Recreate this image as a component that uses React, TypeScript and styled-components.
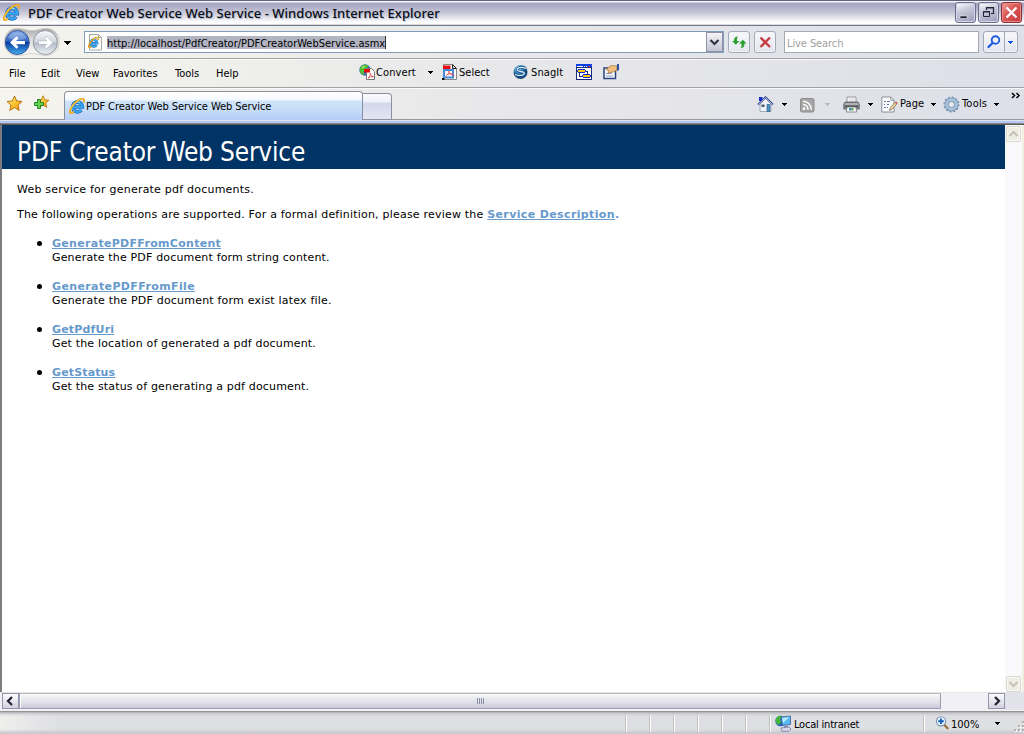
import React from 'react';
import styled, { createGlobalStyle } from 'styled-components';

const UI_FONT = '"DejaVu Sans Condensed", "DejaVu Sans", sans-serif';
const PAGE_FONT = '"DejaVu Sans", sans-serif';

const GlobalStyle = createGlobalStyle`
  * { box-sizing: border-box; }
  html, body { margin: 0; padding: 0; overflow: hidden; }
  svg { display: block; flex: none; }
`;

const Window = styled.div`
  display: flex;
  flex-direction: column;
  width: 1024px;
  height: 734px;
  overflow: hidden;
  font-family: ${UI_FONT};
  font-stretch: condensed;
  font-size: 11px;
  color: #000;
  background: #fff;
`;

const Label = styled.span<{ $ls?: number; $color?: string }>`
  white-space: nowrap;
  line-height: 16px;
  letter-spacing: ${p => p.$ls ?? 0}px;
  color: ${p => p.$color ?? '#000'};
`;

/* ---------- title bar ---------- */
const TitleBar = styled.header`
  display: flex;
  align-items: flex-start;
  height: 26px;
  padding: 0 2px 0 3px;
  border-bottom: 1px solid #77778c;
  background: linear-gradient(#62627a 0, #62627a 1px, #f6f6fa 1px, #f6f6fa 2px, #a6a5c0 3px, #adacc6 6px, #c4c4d4 12px, #e4e4ec 18px, #fdfdfe 22px, #fff 24px, #b4b4c2 25px);
`;
const TitleIcon = styled.div`
  flex: 0 0 25px;
  padding-top: 4px;
`;
const TitleText = styled.h1`
  flex: 1;
  margin: 4px 0 0;
  font: 500 13px/18px "Noto Sans", sans-serif;
  letter-spacing: 0.045px;
  white-space: nowrap;
  color: #0c0c14;
  text-shadow: 1px 1px 1px #a5b4cc;
`;
const Captions = styled.div`
  display: flex;
  gap: 2px;
  padding-top: 2px;
`;
const CaptionButton = styled.button<{ $close?: boolean }>`
  width: 21px;
  height: 21px;
  padding: 0;
  border: 1px solid ${p => (p.$close ? '#8a2c38' : '#6c6c90')};
  border-radius: 3px;
  background: ${p => p.$close
    ? 'linear-gradient(135deg, #f0a6a0, #dc5a58 40%, #c8383c)'
    : 'linear-gradient(160deg, #fff, #c8c8da 40%, #9c9cb8)'};
  box-shadow: inset 0 0 0 1px ${p => (p.$close ? '#e88c88' : '#d4d4e4')};
`;

/* ---------- bars ---------- */
const barTone = 'linear-gradient(90deg, #f5f4ee 0, #eeeeeb 260px, #e8e8ea 480px, #e3e4e9 760px, #dddfe9 1024px)';
const NavBar = styled.nav`
  display: flex;
  align-items: flex-start;
  height: 33px;
  padding: 0 6px 0 4px;
  border-bottom: 1px solid #a2a2a4;
  background: ${barTone};
`;
const TravelButtons = styled.div`
  flex: 0 0 80px;
  padding-top: 2px;
`;
const AddressBox = styled.div`
  display: flex;
  flex: 0 0 640px;
  height: 22px;
  margin-top: 5px;
  border: 1px solid #7f9db9;
  background: #fff;
  padding-left: 3px;
`;
const AddressIcon = styled.div`
  flex: 0 0 19px;
  padding-top: 2px;
`;
const Address = styled.div`
  flex: 1;
  padding-top: 4px;
  line-height: 13px;
`;
const Selected = styled.span`
  display: inline-block;
  width: 279px;
  height: 13px;
  border-right: 1px solid #333;
  background: #b2b4c2;
  white-space: nowrap;
  line-height: 15px;
  letter-spacing: 0;
`;
const DropButton = styled.button`
  width: 17px;
  height: 20px;
  padding: 0;
  border: 1px solid #8f8fa6;
  background: linear-gradient(#f4f4f8, #c4c4d4);
`;
const ToolButton = styled.button<{ $left: number; $width: number }>`
  display: flex;
  flex: 0 0 ${p => p.$width}px;
  height: 22px;
  margin: 5px 0 0 ${p => p.$left}px;
  padding: 0;
  border: 1px solid #a3abb9;
  border-radius: 3px;
  background: linear-gradient(#f8f8fb, #e4e6ef);
  box-shadow: inset 0 0 0 1px #f3f4f8;
`;
const SearchBox = styled.div`
  flex: 0 0 195px;
  height: 22px;
  margin: 5px 0 0 8px;
  padding: 4px 0 0 2px;
  border: 1px solid #a3a9b2;
  background: #fff;
`;

const MenuBar = styled.div`
  display: flex;
  height: 29px;
  padding-left: 9px;
  border-top: 1px solid #fafafa;
  border-bottom: 1px solid #a2a2a4;
  background: ${barTone};
`;
const MenuItem = styled.div<{ $width: number }>`
  flex: 0 0 ${p => p.$width}px;
  padding-top: 6px;
`;
const Command = styled.div<{ $width: number; $gap?: number }>`
  display: flex;
  flex: 0 0 ${p => p.$width}px;
  gap: ${p => p.$gap ?? 1}px;
  padding-top: 4px;
  & > span { padding-top: 1px; }
`;

const TabRow = styled.div`
  display: flex;
  height: 32px;
  border-top: 1px solid #fafafa;
  background: ${barTone};
`;
const Favourites = styled.div`
  display: flex;
  flex: 0 0 64px;
  gap: 10px;
  padding: 6px 0 0 6px;
  border-bottom: 1px solid #98989f;
`;
const ActiveTab = styled.div`
  display: flex;
  flex: 0 0 299px;
  gap: 1px;
  margin-top: 2px;
  padding: 6px 0 0 4px;
  border: 1px solid #8e8f9c;
  border-bottom: 0;
  border-radius: 4px 4px 0 0;
  background: linear-gradient(#fff 0, #f4f9fd 8px, #cfe4f9 9px, #c8def8 16px, #b6cbf7 29px);
  & > span { padding-top: 1px; }
`;
const NewTab = styled.div`
  flex: 0 0 29px;
  margin-top: 4px;
  border: 1px solid #8e8f9c;
  border-left: 0;
  border-radius: 0 4px 0 0;
  background: linear-gradient(#fafafe 0, #eef0f9 8px, #d2d7ea 9px, #e2e6f3 25px);
`;
const CommandBar = styled.div`
  display: flex;
  flex: 1;
  padding: 0 0 0 365px;
  border-bottom: 1px solid #98989f;
`;
const BarItem = styled.div<{ $width: number; $top?: number }>`
  display: flex;
  flex: 0 0 ${p => p.$width}px;
  padding-top: ${p => p.$top ?? 7}px;
  & > span { padding: 0 0 0 2px; }
`;
const TabStrip = styled.div`
  height: 5px;
  background: linear-gradient(#dfe3f0 0, #dfe3f0 1px, #b6c6f2 1px, #b6c6f2 3px, #858585 3px, #858585 4px, #5c5a55 4px);
`;

/* ---------- document ---------- */
const Viewport = styled.div`
  display: flex;
  height: 567px;
  border-left: 2px solid #7c7c80;
  border-right: 2px solid #f1efe2;
`;
const Doc = styled.main`
  flex: 1;
  font-family: ${PAGE_FONT};
  font-stretch: normal;
  font-size: 11px;
  line-height: 14px;
`;
const DocTitle = styled.h2`
  margin: 0;
  height: 44px;
  padding: 11px 0 0 15px;
  background: #003366;
  color: #fff;
  font: normal 26px/32px ${UI_FONT};
  font-stretch: condensed;
  letter-spacing: -0.18px;
  white-space: nowrap;
`;
const Para = styled.p<{ $top: number; $ls: number }>`
  margin: ${p => p.$top}px 0 0 15px;
  letter-spacing: ${p => p.$ls}px;
  white-space: nowrap;
`;
const Link = styled.a<{ $ls: number }>`
  color: #6699cc;
  font-weight: bold;
  letter-spacing: ${p => p.$ls}px;
  text-decoration: underline;
  text-underline-offset: 1px;
`;
const LinkStop = styled.span`
  color: #6699cc;
  font-weight: bold;
`;
const Summary = styled.div<{ $ls: number }>`
  letter-spacing: ${p => p.$ls}px;
`;
const Operations = styled.ul`
  margin: 15px 0 0;
  padding: 0 0 0 35px;
  list-style: none;
`;
const Operation = styled.li`
  display: grid;
  grid-template-columns: 15px 1fr;
  margin-bottom: 15px;
  white-space: nowrap;
`;
const Bullet = styled.i`
  width: 5px;
  height: 5px;
  margin-top: 4px;
  border-radius: 50%;
  background: #000;
`;
const VScroll = styled.div`
  display: flex;
  flex: 0 0 17px;
  flex-direction: column;
  justify-content: space-between;
  padding: 1px 0 0 1px;
  background: #f9f9fb;
`;
const VButton = styled.div`
  width: 15px;
  height: 16px;
  border: 1px solid #d9d8cc;
  border-radius: 2px;
  background: #ededE6;
  box-shadow: inset 0 0 0 1px #f8f8f4;
`;
const HScroll = styled.div`
  display: flex;
  height: 19px;
  padding: 1px 19px 1px 2px;
  border-bottom: 1px solid #f3f1ea;
  background: linear-gradient(90deg, transparent 1005px, #e2e3ea 1005px), linear-gradient(#e6e5e0 0, #e6e5e0 1px, #f0f0f6 1px);
`;
const HButton = styled.div`
  flex: 0 0 17px;
  height: 16px;
  border: 1px solid #9393aa;
  background: linear-gradient(#fcfcfd, #d2d2e0);
`;
const HThumb = styled.div`
  display: flex;
  flex: 0 0 922px;
  justify-content: center;
  height: 16px;
  padding-top: 4px;
  border: 1px solid #9c9cb0;
  border-top-color: #b8b8b8;
  background: linear-gradient(#fff 0, #f1f1f5 2px, #e2e2ea 8px, #c9c9da 14px);
  box-shadow: inset 1px 0 #fff;
`;
const HTrack = styled.div`
  flex: 1;
`;

/* ---------- status bar ---------- */
const StatusBar = styled.footer`
  display: flex;
  height: 23px;
  padding-top: 4px;
  background:
    linear-gradient(#7f7f88 0, #a9a9b0 1px, #c6c6cb 2px, transparent 5px, transparent 18px, #c4c4c9 23px),
    linear-gradient(90deg, #efefed 0, #dedfe3 60px, #dedfe3);
`;
const StatusPane = styled.div<{ $width: number }>`
  display: flex;
  flex: 0 0 ${p => p.$width}px;
  height: 17px;
  border-right: 1px solid #fff;
  box-shadow: inset -1px 0 #c3c2b8;
`;
const Zone = styled(StatusPane)`
  gap: 2px;
  padding-left: 4px;
  & > span { padding-top: 2px; }
`;
const ZoomPane = styled.div`
  display: flex;
  flex: 0 0 84px;
  padding-left: 10px;
  & > span { flex: 0 0 44px; padding: 2px 0 0 1px; }
  & > svg:last-child { margin-top: 7px; }
`;

/* ---------- icons ---------- */
const IELogo = ({ size = 16, x }: { size?: number; x?: number }) => (
  <svg x={x} y={x === undefined ? undefined : 3} width={size} height={size} viewBox="0 0 16 16">
    <path d="M4.500 9H13.300A4.800 4.900 0 1 0 12.300 12" fill="none" stroke="#1763bf" strokeWidth="3.600" />
    <path d="M4.500 9H13.300A4.800 4.900 0 1 0 12.300 12" fill="none" stroke="#38a5ee" strokeWidth="2.300" />
    <path d="M4.800 6.300c1.200-2 3.600-2.900 6-1.900" fill="none" stroke="#a5e2ff" strokeWidth="1" />
    <path d="M4.800 13.700C2.800 15.300 1 15.800.9 14.200.8 12.600 2 9.600 4.500 6.500 7.300 3 11.800.3 14 .9c1.400.4 1.200 2 .5 3.400" fill="none" stroke="#c98310" strokeWidth="1.900" />
    <path d="M4.800 13.700C2.800 15.300 1 15.800.9 14.200.8 12.600 2 9.600 4.500 6.500 7.300 3 11.800.3 14 .9c1.400.4 1.200 2 .5 3.400" fill="none" stroke="#ffc83d" strokeWidth="1.200" />
  </svg>
);

const Arrow = ({ color = '#000', top = 0, left = 0 }: { color?: string; top?: number; left?: number }) => (
  <svg width={5 + left} height={4 + top} shapeRendering="crispEdges">
    <path d={`M${left} ${top}h5v1h-1v1h-1v1h-1v-1h-1v-1h-1z`} fill={color} />
  </svg>
);

const Travel = () => (
  <svg width="72" height="29" viewBox="0 0 72 29">
    <defs>
      <linearGradient id="back" x2="0" y2="1"><stop stopColor="#8fb3ea" /><stop offset=".45" stopColor="#2f64c4" /><stop offset=".5" stopColor="#0a3c9c" /><stop offset="1" stopColor="#45b0f2" /></linearGradient>
      <linearGradient id="fwd" x2="0" y2="1"><stop stopColor="#f8f9fb" /><stop offset=".48" stopColor="#d0d5dd" /><stop offset=".52" stopColor="#b3bbc7" /><stop offset="1" stopColor="#eef2f6" /></linearGradient>
      <linearGradient id="pod" x2="0" y2="1"><stop stopColor="#a8a8ac" /><stop offset=".4" stopColor="#dcdcdc" /><stop offset="1" stopColor="#fafafa" /></linearGradient>
    </defs>
    <path d="M13 .5C20 .5 21 2.500 28 2.500S36 .5 42 .5C60 .5 59 27.500 42 27.500 36 27.500 34 25.500 28 25.500S20 27.500 13 27.500C-4 27.500-4 .5 13 .5z" fill="url(#pod)" stroke="#c9c9c8" strokeWidth=".8" />
    <circle cx="13.300" cy="14.500" r="12" fill="url(#back)" stroke="#36599a" />
    <path d="M4.500 10C7 3 19.500 3 22 10 18 13 9 13 4.500 10z" fill="#fff" opacity=".22" />
    <path d="M6 14.500l6.500-6.200 2 2-2.400 2.600H21v3.400h-8.900l2.400 2.500-2 2z" fill="#fff" />
    <circle cx="41.300" cy="14.500" r="12" fill="url(#fwd)" stroke="#92979f" />
    <path d="M49 14.500l-6.500-6.200-2 2 2.400 2.600H34.500v3.400h8.400l-2.400 2.500 2 2z" fill="#fff" stroke="#a7aeb9" strokeWidth=".6" />
    <path d="M60 13h7v1h-1v1h-1v1h-1v1h-1v-1h-1v-1h-1v-1h-1z" fill="#000" shapeRendering="crispEdges" />
  </svg>
);

const Star = ({ plus }: { plus?: boolean }) => (
  <svg width="17" height="17" viewBox="0 0 17 17">
    <defs><linearGradient id="gold" x2="1" y2="1"><stop stopColor="#fff3a0" /><stop offset=".5" stopColor="#fbc52e" /><stop offset="1" stopColor="#ef8e10" /></linearGradient></defs>
    <path transform={plus ? 'translate(3.200 0) scale(.8)' : undefined} d="M8.500 1l2.200 5 5.300.5-4 3.600 1.200 5.300-4.700-2.800-4.700 2.800L5 10.100 1 6.500 6.300 6z" fill="url(#gold)" stroke="#b9720f" strokeWidth="1" strokeLinejoin="round" />
    {plus && <path d="M4.500 4.500h3v3h3v3h-3v3h-3v-3h-3v-3h3z" fill="#63d04c" stroke="#1c7c1c" strokeWidth=".9" />}
  </svg>
);

const ConvertIcon = () => (
  <svg width="16" height="16" viewBox="0 0 16 16">
    <circle cx="6" cy="6" r="5.700" fill="#3f6fb4" />
    <path d="M2 2.200C4 .3 8 .2 9.500 1.500L8 4 9 6 5.500 8 4 11C.5 9 0 5 2 2.200z" fill="#56bd35" />
    <path d="M2.800 3.200l2-1.500 1 .8-2 2z" fill="#b6ef8b" />
    <path d="M7.500 4.500h5.200l2.800 3v8h-8z" fill="#fff" stroke="#777" />
    <path d="M5 5h6v3.500H5z" fill="#e80b0b" />
    <path d="M9 14c2-1.500 2.500-3.500 2.300-4.700.5 2 1.800 3.200 3.200 3.400-2-.3-4 .2-5.500 1.300z" fill="none" stroke="#e04848" strokeWidth=".9" />
  </svg>
);
const SelectIcon = () => (
  <svg width="16" height="16" viewBox="0 0 16 16">
    <path d="M1.500.5h9l4 4v11h-13z" fill="#fff" stroke="#888" />
    <path d="M10.500.5v4h4z" fill="#ddd" stroke="#222" />
    <path d="M1 1.500h7.500v4H1z" fill="#e80b0b" />
    <path d="M2 6h9v7.500H2z" fill="#fff" stroke="#4c87d6" strokeWidth="2" />
    <path d="M4 12c3-2 3-4 2.800-5 .7 2.500 3 4 5.700 5M5 10.500c2-.8 4-.6 6-.6" fill="none" stroke="#e04848" strokeWidth=".9" />
    <path d="M0 14h2.500v2H0z" fill="#111" />
  </svg>
);
const SnagIcon = () => (
  <svg width="16" height="16" viewBox="0 0 16 16">
    <defs><radialGradient id="snag" cx=".35" cy=".25"><stop stopColor="#d3effb" /><stop offset=".5" stopColor="#4a9ccc" /><stop offset="1" stopColor="#184a80" /></radialGradient></defs>
    <circle cx="7.500" cy="8" r="7" fill="url(#snag)" />
    <path d="M13 4.300C8 2.200 3 4 4.500 6.300c1.200 1.600 6 .8 6.800 2.700.6 2.300-5 3.300-9.300 1.500" fill="none" stroke="#16538c" strokeWidth="2.800" />
    <path d="M13 4.300C8 2.200 3 4 4.500 6.300c1.200 1.600 6 .8 6.800 2.700.6 2.300-5 3.300-9.300 1.500" fill="none" stroke="#d8effa" strokeWidth="1.300" />
  </svg>
);
const ProfileIcon = () => (
  <svg width="16" height="16" viewBox="0 0 16 16" shapeRendering="crispEdges">
    <path d="M0 0h16v16H0z" fill="#182c78" /><path d="M1 4h14v11H1z" fill="#fff" />
    <path d="M0 0h16v3H0z" fill="#0a3fe8" /><path d="M1 2h6v1H1z" fill="#fff" /><path d="M8 2h1v1H8zM10 2h1v1h-1z" fill="#fff" /><path d="M12 2h2v1h-2z" fill="#e22" />
    <path d="M2 5h7v1H2zM1 6h1v2H1zM9 6h1v2H9zM2 8h7v1H2zM7 10h7v1H7zM6 11h1v2H6zM14 11h1v2h-1zM7 13h7v1H7z" fill="#1529d0" /><path d="M2 6h7v2H2zM7 11h7v2H7z" fill="#ffc800" />
    <path d="M10 7h2v3h-1V8h-1zM3 9h1v3h2v1H3z" fill="#182c78" />
  </svg>
);
const SnagWindowIcon = () => (
  <svg width="17" height="16" viewBox="0 0 17 16">
    <path d="M1 4h11.500v10.500H1z" fill="#f7f9ff" stroke="#27447d" strokeWidth="1.500" /><path d="M3 9.500h6M3 12h7" stroke="#8a9ab8" />
    <path d="M3 5.500L8 1.500l6 .5v4l-4 2-5 1 1-2z" fill="#efc080" stroke="#a9702c" strokeWidth=".7" />
    <path d="M14 0h2v6l-2 1z" fill="#2c4fa6" />
  </svg>
);
const HomeIcon = () => (
  <svg width="17" height="17" viewBox="0 0 17 17">
    <path d="M2 1h3.500v4H2z" fill="#1b2fc8" />
    <path d="M3 8l5.500-5.500L14 8v7.500H3z" fill="#f2f4f8" stroke="#8c98ae" strokeWidth=".8" />
    <path d="M1 8.700L8.500 1.200 16 8.700" fill="none" stroke="#2d448c" strokeWidth="1.800" /><path d="M1.500 8.500l7-7 7 7" fill="none" stroke="#b6c6e6" strokeWidth=".8" />
    <path d="M4.500 8.500h3V11h-3z" fill="#4a5a74" /><path d="M10 8.500h3v7h-3z" fill="#4b97c9" stroke="#23507c" strokeWidth=".6" />
  </svg>
);
const RssIcon = () => (
  <svg width="15" height="15" viewBox="0 0 15 15">
    <rect x=".5" y=".5" width="13.500" height="13.500" rx="1.500" fill="#a5a5a5" stroke="#8c8c8c" />
    <circle cx="4" cy="10.700" r="1.400" fill="#fff" /><path d="M3 6.500a5 5 0 0 1 5 5.200M3 3.200a8.300 8.300 0 0 1 8.300 8.500" fill="none" stroke="#fff" strokeWidth="1.600" />
  </svg>
);
const PrinterIcon = () => (
  <svg width="17" height="17" viewBox="0 0 17 17">
    <path d="M4 1h9v6H4z" fill="#fff" stroke="#8d8d8d" strokeWidth=".9" /><path d="M5.500 3h6M5.500 5h6" stroke="#bbb" strokeWidth=".7" />
    <path d="M2 6h13l1.200 2v5H.8V8z" fill="#8c8e92" stroke="#505257" strokeWidth=".8" /><path d="M1.500 8h14" stroke="#d0d2d6" /><path d="M2 10.300h13" stroke="#3e4044" strokeWidth="1.200" />
    <path d="M4 11h9l.7 5H3.300z" fill="#f8f8f8" stroke="#777" strokeWidth=".8" /><path d="M6 12h2.500v2.500H6z" fill="#3b8ac9" /><path d="M8.500 12h2v2.500h-2z" fill="#57a947" />
  </svg>
);
const PageIcon = () => (
  <svg width="17" height="17" viewBox="0 0 17 17">
    <path d="M.8 1h9l3.200 3.200V16H.8z" fill="#fbfbfd" stroke="#84858e" strokeWidth=".9" /><path d="M9.800 1v3.200H13" fill="none" stroke="#84858e" strokeWidth=".8" />
    <path d="M3 5.500h2M6 5.500h3M3 8.500h1M6 8.500h2M3 11.500h2M6 11.500h1" stroke="#6a78a8" strokeWidth="1.100" />
    <path d="M8.500 14.500l.7-2.600 5-5.600 1.700 1.500-5 5.700z" fill="#f1d48d" stroke="#6f6a5a" strokeWidth=".7" /><path d="M14 6.500l1-1 1.500 1.500-1 1z" fill="#c44" />
  </svg>
);
const GearIcon = () => (
  <svg width="17" height="17" viewBox="0 0 17 17">
    <circle cx="8.500" cy="8.500" r="7.100" fill="none" stroke="#7691ac" strokeWidth="1.900" strokeDasharray="1.900 1.820" />
    <circle cx="8.500" cy="8.500" r="5" fill="none" stroke="#7896b4" strokeWidth="3.800" />
    <circle cx="8.500" cy="8.500" r="4.800" fill="none" stroke="#a9c3da" strokeWidth="2.700" />
    <circle cx="8.500" cy="8.500" r="2.900" fill="#e8ebf1" stroke="#6b88a5" strokeWidth=".7" />
  </svg>
);
const IntranetIcon = () => (
  <svg width="17" height="17" viewBox="0 0 17 17">
    <circle cx="5.500" cy="6" r="5.200" fill="#2a62b0" /><path d="M1 3.500C3 .3 6 .6 7.500 1L5 4l1 3-2 3C1 8.500 0 6 1 3.500z" fill="#43b83b" />
    <path d="M6 2l9.500-1v8.500l-8 1z" fill="#5bb9f2" stroke="#3b5c9c" strokeWidth=".8" /><path d="M7 3l7.500-1L8 8z" fill="#b5ecff" />
    <path d="M9 10.500h4v2H9z" fill="#8a90b5" /><path d="M6 13l8-1 2 2-2 2.300H7z" fill="#d7daeb" stroke="#7379a4" strokeWidth=".8" />
  </svg>
);
const ZoomIcon = () => (
  <svg width="15" height="16" viewBox="0 0 15 16">
    <path d="M8.500 9l4 4.200" stroke="#9a6d32" strokeWidth="2.300" strokeLinecap="round" />
    <circle cx="6" cy="6.300" r="4.600" fill="#e8f4fd" stroke="#7a91b4" strokeWidth="1.100" /><path d="M6 3.500v5.600M3.200 6.300h5.600" stroke="#1762ba" strokeWidth="1.900" />
  </svg>
);

/* ---------- data ---------- */
const menus: [string, number][] = [['File', 32], ['Edit', 35], ['View', 37], ['Favorites', 62], ['Tools', 41], ['Help', 143]];
const operations: { name: string; nameLs: number; text: string; textLs: number }[] = [
  { name: 'GeneratePDFFromContent', nameLs: 0.3, text: 'Generate the PDF document form string content.', textLs: 0.165 },
  { name: 'GeneratePDFFromFile', nameLs: 0.38, text: 'Generate the PDF document form exist latex file.', textLs: 0.2 },
  { name: 'GetPdfUri', nameLs: 0.18, text: 'Get the location of generated a pdf document.', textLs: 0.16 },
  { name: 'GetStatus', nameLs: 0.14, text: 'Get the status of generating a pdf document.', textLs: 0.16 },
];
const emptyPanes = [627, 24, 24, 24, 24, 24, 24];

export default function App() {
  return (
    <Window>
      <GlobalStyle />
      <TitleBar>
        <TitleIcon><IELogo size={17} /></TitleIcon>
        <TitleText>PDF Creator Web Service Web Service - Windows Internet Explorer</TitleText>
        <Captions>
          <CaptionButton><svg width="19" height="19"><path d="M4 13h7v2.500H4z" fill="#20203c" stroke="#fff" strokeWidth=".5" /></svg></CaptionButton>
          <CaptionButton><svg width="19" height="19" fill="none" stroke="#22223c"><path d="M7.500 7V4.500h7v6H12" strokeWidth="1.200" /><path d="M7 5h8" /><path d="M4.500 8.500h6v5h-6zM4 9h7" /></svg></CaptionButton>
          <CaptionButton $close><svg width="19" height="19"><path d="M4.500 4.500l10 10M14.500 4.500l-10 10" stroke="#fff" strokeWidth="2.300" /></svg></CaptionButton>
        </Captions>
      </TitleBar>

      <NavBar>
        <TravelButtons><Travel /></TravelButtons>
        <AddressBox>
          <AddressIcon>
            <svg width="15" height="17" viewBox="0 0 15 17">
              <path d="M1.500.5h9l3 3v12.500h-12z" fill="#fbfbf8" stroke="#aaa9a0" />
              <path d="M10.500.5v3h3" fill="none" stroke="#aaa9a0" />
              <IELogo size={11} x={0} />
            </svg>
          </AddressIcon>
          <Address><Selected>http://localhost/PdfCreator/PDFCreatorWebService.asmx</Selected></Address>
          <DropButton><svg width="15" height="18"><path d="M3.500 7l4 4 4-4" fill="none" stroke="#333340" strokeWidth="2.200" /></svg></DropButton>
        </AddressBox>
        <ToolButton $left={4} $width={22}>
          <svg width="20" height="20" fill="#2ca02c"><path d="M3 9h2c0-3 1-4.500 4-4.500C8 5.500 7.800 7 8 9h2.500L6.800 12.800z" /><path d="M17.500 11.500h-2c0 3-1 4.500-4 4.500 1-1 1.200-2.500 1-4.500H10l3.800-3.800z" /></svg>
        </ToolButton>
        <ToolButton $left={4} $width={22}>
          <svg width="20" height="20"><path d="M5.500 5.500l9.500 9.500M15 5.500l-9.500 9.500" stroke="#c43c40" strokeWidth="2.300" /></svg>
        </ToolButton>
        <SearchBox><Label $color="#a0a0a0" $ls={-0.09}>Live Search</Label></SearchBox>
        <ToolButton $left={4} $width={35}>
          <svg width="33" height="20"><circle cx="11.500" cy="8" r="3.800" fill="none" stroke="#1c5be0" strokeWidth="1.900" /><path d="M8.500 11L4.500 15" stroke="#1c5be0" strokeWidth="2.300" strokeLinecap="round" /><path d="M20.500 0v20" stroke="#a3abb9" /><path d="M24 9h5v1h-1v1h-1v1h-1v-1h-1v-1h-1z" fill="#1054e0" shapeRendering="crispEdges" /></svg>
        </ToolButton>
      </NavBar>

      <MenuBar>
        {menus.map(([name, width]) => <MenuItem key={name} $width={width}><Label>{name}</Label></MenuItem>)}
        <Command $width={68}><ConvertIcon /><Label $ls={0.1}>Convert</Label></Command>
        <Command $width={15}><Arrow top={7} left={1} /></Command>
        <Command $width={71}><SelectIcon /><Label>Select</Label></Command>
        <Command $width={63} $gap={2}><SnagIcon /><Label $ls={0.1}>SnagIt</Label></Command>
        <Command $width={27}><ProfileIcon /></Command>
        <Command $width={20}><SnagWindowIcon /></Command>
      </MenuBar>

      <TabRow>
        <Favourites><Star /><Star plus /></Favourites>
        <ActiveTab><IELogo /><Label $ls={-0.08}>PDF Creator Web Service Web Service</Label></ActiveTab>
        <NewTab />
        <CommandBar>
          <BarItem $width={25}><HomeIcon /></BarItem>
          <BarItem $width={18}><Arrow top={7} /></BarItem>
          <BarItem $width={25} $top={9}><RssIcon /></BarItem>
          <BarItem $width={18}><Arrow top={7} color="#bcbcb8" /></BarItem>
          <BarItem $width={25}><PrinterIcon /></BarItem>
          <BarItem $width={13}><Arrow top={7} /></BarItem>
          <BarItem $width={50}><PageIcon /><Label $ls={0.1}>Page</Label></BarItem>
          <BarItem $width={12}><Arrow top={7} /></BarItem>
          <BarItem $width={51}><GearIcon /><Label $ls={0.2}>Tools</Label></BarItem>
          <BarItem $width={17}><Arrow top={7} /></BarItem>
          <BarItem $width={10} $top={3}><svg width="10" height="8" fill="none" stroke="#000" strokeWidth="1.500"><path d="M1 1l2.500 2.500L1 6M5.500 1L8 3.500 5.500 6" /></svg></BarItem>
        </CommandBar>
      </TabRow>
      <TabStrip />

      <Viewport>
        <Doc>
          <DocTitle>PDF Creator Web Service</DocTitle>
          <Para $top={14} $ls={0.22}>Web service for generate pdf documents.</Para>
          <Para $top={11} $ls={0.21}>The following operations are supported. For a formal definition, please review the <Link $ls={0.37}>Service Description</Link><LinkStop>.</LinkStop></Para>
          <Operations>
            {operations.map(op => (
              <Operation key={op.name}>
                <Bullet />
                <div>
                  <Link $ls={op.nameLs}>{op.name}</Link>
                  <Summary $ls={op.textLs}>{op.text}</Summary>
                </div>
              </Operation>
            ))}
          </Operations>
        </Doc>
        <VScroll>
          <VButton><svg width="13" height="14"><path d="M2.500 9l4-4 4 4" fill="none" stroke="#c3c3b6" strokeWidth="2" /></svg></VButton>
          <VButton><svg width="13" height="14"><path d="M2.500 5l4 4 4-4" fill="none" stroke="#c3c3b6" strokeWidth="2" /></svg></VButton>
        </VScroll>
      </Viewport>
      <HScroll>
        <HButton><svg width="15" height="14"><path d="M9 3L5 7l4 4" fill="none" stroke="#222230" strokeWidth="2.200" /></svg></HButton>
        <HThumb><svg width="8" height="6" shapeRendering="crispEdges"><path d="M1.500 0v6M3.500 0v6M5.500 0v6M7.500 0v6" stroke="#8e8ea2" /></svg></HThumb>
        <HTrack />
        <HButton><svg width="15" height="14"><path d="M6 3l4 4-4 4" fill="none" stroke="#222230" strokeWidth="2.200" /></svg></HButton>
      </HScroll>

      <StatusBar>
        {emptyPanes.map((width, i) => <StatusPane key={i} $width={width} />)}
        <Zone $width={154}><IntranetIcon /><Label $ls={-0.2}>Local intranet</Label></Zone>
        <ZoomPane><ZoomIcon /><Label>100%</Label><Arrow left={1} /></ZoomPane>
        <svg width="15" height="19" shapeRendering="crispEdges"><path d="M14 7h2v2h-2zM10 11h2v2h-2zM14 11h2v2h-2zM6 15h2v2H6zM10 15h2v2h-2zM14 15h2v2h-2z" fill="#fff" /><path d="M13 6h2v2h-2zM9 10h2v2H9zM13 10h2v2h-2zM5 14h2v2H5zM9 14h2v2H9zM13 14h2v2h-2z" fill="#b2b0a8" /></svg>
      </StatusBar>
    </Window>
  );
}
